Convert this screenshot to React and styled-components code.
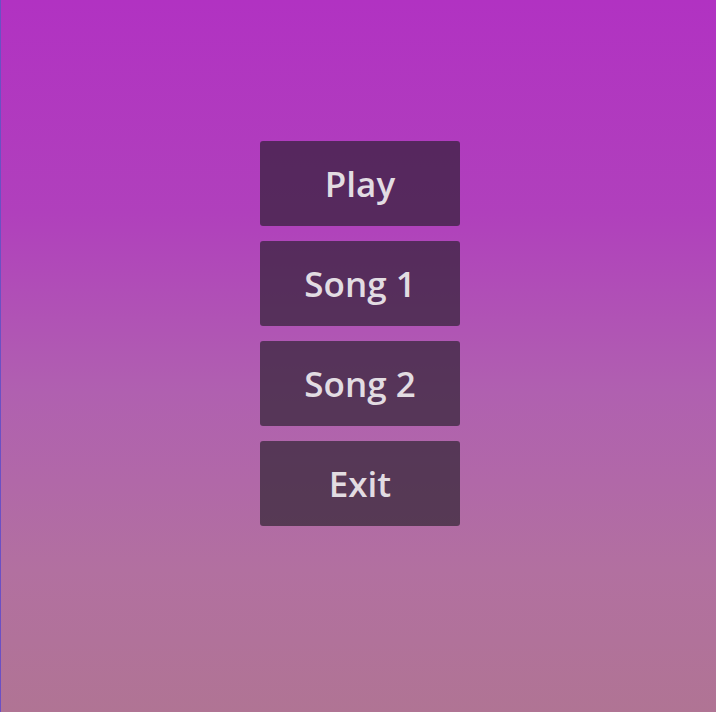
import React from "react";
import styled, { createGlobalStyle } from "styled-components";

const Global = createGlobalStyle`
  html, body { margin: 0; padding: 0; height: 100%; }
  body { font-family: "Open Sans", "Noto Sans", sans-serif; }
`;

const Screen = styled.div`
  box-sizing: border-box;
  width: 716px;
  height: 712px;
  border-left: 1px solid #6b50c4;
  background: linear-gradient(to bottom, #b132c2 0%, #b040bc 30%, #b060b0 55%, #b270a0 80%, #b07494 100%);
  display: flex;
  flex-direction: column;
  align-items: center;
  padding: 141px 0 0 3px;
  gap: 15px;
`;

const MenuButton = styled.button`
  box-sizing: border-box;
  width: 200px;
  height: 85px;
  border: none;
  border-radius: 3px;
  background: rgba(30, 28, 36, 0.62);
  color: #e2dce2;
  font-family: "Open Sans", "Noto Sans", sans-serif;
  font-weight: 600;
  font-size: 35px;
  padding: 0;
  cursor: pointer;
  display: flex;
  align-items: center;
  justify-content: center;
`;

const items = ["Play", "Song 1", "Song 2", "Exit"];

export default function App() {
  return (
    <>
      <Global />
      <Screen>
        {items.map((t) => (
          <MenuButton key={t}>{t}</MenuButton>
        ))}
      </Screen>
    </>
  );
}
